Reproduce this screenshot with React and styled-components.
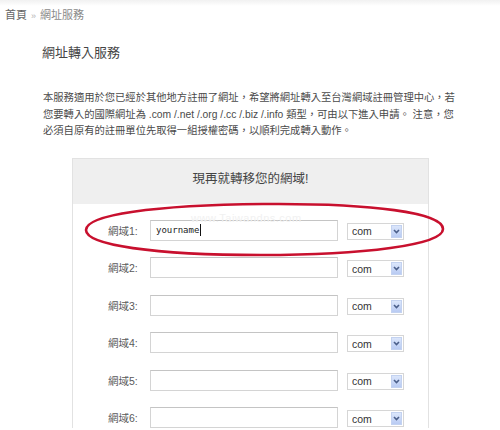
import React from 'react';
import styled, { createGlobalStyle } from 'styled-components';

const GlobalStyle = createGlobalStyle`
body {
  margin: 0;
  background: #fff;
  font-family: "Liberation Sans", "Noto Sans CJK TC", sans-serif;
  color: #444;
}
`

const Page = styled.div`
  background: linear-gradient(#f1f1f1 0px, #fff 6px);
  min-height: 430px;
  overflow: hidden;
`

const Breadcrumb = styled.div`
  padding: 8px 0 0 5px;
  font-size: 11px;
  line-height: 14px;
  color: #888;
`

const Crumb = styled.span`
  color: ${props => props.home ? '#666' : '#8a8a8a'};
`

const Sep = styled.span`
  color: #b5b5b5;
  margin: 0 4px;
  font-size: 9px;
`

const Title = styled.h1`
  margin: 21px 0 0 42px;
  font-size: 13px;
  line-height: 18px;
  font-weight: normal;
  color: #444;
`

const Intro = styled.p`
  margin: 28px 0 0 43px;
  width: 420px;
  font-size: 10.3px;
  line-height: 16.5px;
  color: #4a4a4a;
`

const Panel = styled.div`
  position: relative;
  margin: 18px 0 0 72px;
  width: 355px;
  border: 1px solid #e2e2e2;
  border-bottom: none;
`

const PanelHead = styled.div`
  background: #efefef;
  height: 45px;
  box-sizing: border-box;
  padding-top: 10px;
  text-align: center;
  font-size: 12.5px;
  line-height: 20px;
  color: #444;
`

const Rows = styled.div`
  padding: 16px 0 0 35px;
  display: flex;
  flex-direction: column;
  gap: 16.5px;
`

const Row = styled.div`
  display: grid;
  grid-template-columns: 42px 188px 66px;
  align-items: center;
  height: 21px;
`

const Label = styled.span`
  font-size: 10.5px;
  color: #5a5a5a;
`

const TextBox = styled.div`
  box-sizing: border-box;
  height: 21px;
  border: 1px solid #d4d4d4;
  border-top-color: #c4c4c4;
  background: #fff;
  padding: 0 5px;
  display: flex;
  align-items: center;
  font-family: "DejaVu Sans Mono", monospace;
  font-size: 9px;
  color: #222;
`

const Caret = styled.span`
  display: inline-block;
  width: 1px;
  height: 12px;
  background: #111;
  margin-left: 1px;
`

const Select = styled.div`
  box-sizing: border-box;
  height: 17px;
  margin: 2px 0 0 9px;
  border: 1px solid #d6d6d6;
  background: #fff;
  display: flex;
  align-items: center;
  justify-content: space-between;
  padding: 0 1px 0 4px;
  font-size: 10.5px;
  color: #333;
`

const Arrow = styled.span`
  width: 11px;
  height: 13px;
  background: linear-gradient(#dbe6fb, #b9cbf3);
  border: 1px solid #c3d2f0;
  box-sizing: border-box;
  display: flex;
  align-items: center;
  justify-content: center;
`

const Highlight = styled.svg`
  position: absolute;
  left: 10px;
  top: 42px;
  overflow: visible;
  pointer-events: none;
`

const Watermark = styled.span`
  position: absolute;
  left: 118px;
  top: 53px;
  font-size: 11px;
  letter-spacing: 0.5px;
  color: #f1f1f1;
  pointer-events: none;
`

const Chevron = () => (
  <svg width="7" height="5" viewBox="0 0 7 5">
    <path d="M1 1 L3.5 3.5 L6 1" fill="none" stroke="#4b5f8a" strokeWidth="1.6" />
  </svg>
)

const domains = [1, 2, 3, 4, 5, 6]

export default function App() {
  return (
    <Page>
      <GlobalStyle />
      <Breadcrumb>
        <Crumb home>首頁</Crumb>
        <Sep>»</Sep>
        <Crumb>網址服務</Crumb>
      </Breadcrumb>
      <Title>網址轉入服務</Title>
      <Intro>
        本服務適用於您已經於其他地方註冊了網址，希望將網址轉入至台灣網域註冊管理中心，若您要轉入的國際網址為 .com /.net /.org /.cc /.biz /.info 類型，可由以下進入申請。 注意，您必須自原有的註冊單位先取得一組授權密碼，以順利完成轉入動作。
      </Intro>
      <Panel>
        <PanelHead>現再就轉移您的網域!</PanelHead>
        <Rows>
          {domains.map(n => (
            <Row key={n}>
              <Label>網域{n}:</Label>
              <TextBox>
                {n === 1 && <>yourname<Caret /></>}
              </TextBox>
              <Select>
                com
                <Arrow><Chevron /></Arrow>
              </Select>
            </Row>
          ))}
        </Rows>
        <Watermark>www.Taiwandns.com</Watermark>
        <Highlight width="362" height="56" viewBox="0 0 362 56">
          <path
            d="M180 3 C 290 2, 360 12, 360 28 C 360 44, 280 54, 178 54 C 70 54, 3 44, 3 29 C 3 14, 70 4, 180 3 Z"
            fill="none"
            stroke="#c8102e"
            strokeWidth="2.6"
          />
        </Highlight>
      </Panel>
    </Page>
  );
}
